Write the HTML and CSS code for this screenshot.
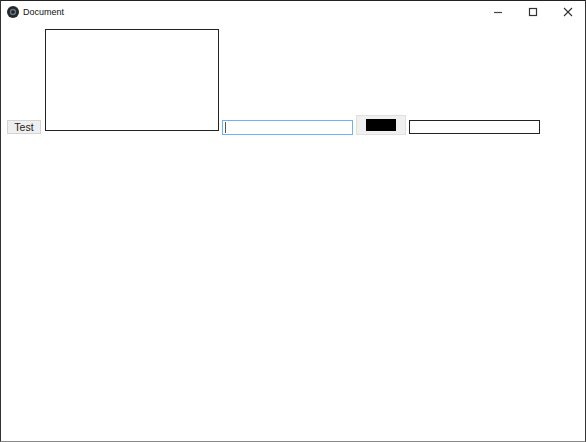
FILE: index.html
```html
<!DOCTYPE html>
<html lang="en">
<head>
<meta charset="utf-8">
<title>Document</title>
<link rel="stylesheet" href="styles.css">
</head>
<body>
<div class="window">
  <header class="titlebar">
    <svg class="app-icon" width="12" height="12" viewBox="0 0 12 12"><circle cx="6" cy="6" r="6" fill="#23282d"/><circle cx="6" cy="6" r="3.2" fill="#6a747d"/><circle cx="6" cy="6" r="1.8" fill="#1f2328"/></svg>
    <span class="title">Document</span>
    <div class="controls">
      <svg class="ctl" width="10" height="10" viewBox="0 0 10 10"><path d="M1 5.5H9" stroke="#444" stroke-width="1.2" fill="none"/></svg>
      <svg class="ctl" width="10" height="10" viewBox="0 0 10 10"><rect x="1.5" y="1.5" width="7" height="7" stroke="#333" stroke-width="1.2" fill="none"/></svg>
      <svg class="ctl" width="10" height="10" viewBox="0 0 10 10"><path d="M1 1L9 9M9 1L1 9" stroke="#333" stroke-width="1.1" fill="none"/></svg>
    </div>
  </header>
  <main class="row">
    <button class="btn" type="button">Test</button>
    <div class="area"></div>
    <div class="field focused"><span class="caret"></span></div>
    <div class="swatch-btn"><span class="swatch"></span></div>
    <div class="field plain"></div>
  </main>
</div>
</body>
</html>
```
FILE: styles.css
```css
* { box-sizing: border-box; }
html, body { margin: 0; height: 100%; background: #fff; }
.window {
  width: 586px;
  height: 442px;
  border-left: 1px solid #333;
  border-right: 1px solid #333;
  border-top: 1px solid #222;
  border-bottom: 1px solid #888;
  overflow: hidden;
  font-family: "Liberation Sans", Arial, sans-serif;
}
.titlebar {
  display: flex;
  align-items: center;
  height: 22px;
  padding-left: 6px;
}
.app-icon { margin-right: 4px; }
.title { font-size: 9px; color: #111; }
.controls {
  margin-left: auto;
  margin-right: 12px;
  display: flex;
  gap: 25px;
}
.row {
  display: flex;
  align-items: flex-end;
  padding: 6px 0 0 6px;
}
.btn {
  width: 34px;
  height: 14px;
  padding: 0;
  margin: 0 4px 1px 0;
  border: 1px solid #d4d4d4;
  background: #efefef;
  font: 10.5px "Liberation Sans", Arial, sans-serif;
  color: #222;
  line-height: 12px;
}
.area {
  width: 174px;
  height: 102px;
  margin: 0 3px 4px 0;
  border: 1px solid #222;
}
.field {
  width: 131px;
  height: 15px;
  display: flex;
  align-items: center;
}
.focused {
  border: 1px solid #6db3f2;
  padding-left: 2px;
  margin-right: 3px;
}
.caret { width: 1px; height: 11px; background: #555; }
.plain {
  height: 14px;
  border: 1px solid #222;
  margin-bottom: 1px;
}
.swatch-btn {
  width: 50px;
  height: 20px;
  margin-right: 3px;
  border: 1px solid #e0e0e0;
  background: #f0f0f0;
  display: flex;
  align-items: center;
  justify-content: center;
}
.swatch { width: 30px; height: 12px; background: #000; }
```
